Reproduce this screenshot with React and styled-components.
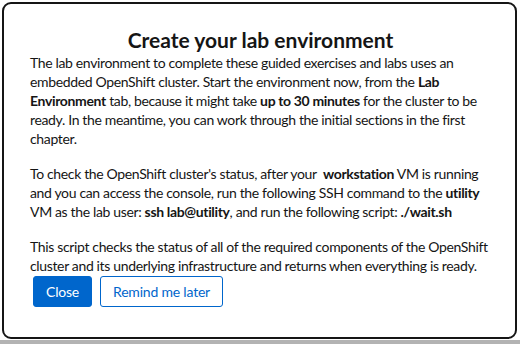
import React from "react";
import styled, { createGlobalStyle } from "styled-components";

const GlobalStyle = createGlobalStyle`
  html, body {
    margin: 0;
    padding: 0;
  }
  body {
    width: 520px;
    height: 344px;
    overflow: hidden;
    background: linear-gradient(to bottom, #ffffff 0, #ffffff 340px, #b3b3b3 340px);
    font-family: "Lato", "Liberation Sans", sans-serif;
  }
`;

const Page = styled.div`
  padding: 2px 3px 5px 2px;
`;

const Modal = styled.div`
  box-sizing: border-box;
  height: 337px;
  background: #fff;
  border: 2px solid #151515;
  border-radius: 9px;
  padding: 24px 8px 0 26px;
  color: #151515;
`;

const Title = styled.h1`
  margin: 0 16px 1px 0;
  text-align: center;
  font-size: 21px;
  font-weight: 700;
  line-height: 24px;
`;

const Body = styled.div`
  display: flex;
  flex-direction: column;
  gap: 16px;
  font-size: 14px;
  line-height: 19px;
  letter-spacing: -0.35px;
`;

const Para = styled.p`
  margin: 0;
  white-space: nowrap;
`;

const Actions = styled.div`
  display: flex;
  gap: 8px;
  margin-top: 1px;
  padding-left: 3px;
`;

const Button = styled.button`
  box-sizing: border-box;
  height: 31px;
  padding: 0 12px;
  border-radius: 3px;
  font-family: inherit;
  font-size: 14px;
  letter-spacing: -0.2px;
  border: 1px solid #0066cc;
  background: ${(p) => (p.$primary ? "#0066cc" : "#fff")};
  color: ${(p) => (p.$primary ? "#fff" : "#0066cc")};
  cursor: pointer;
`;

export default function App() {
  return (
    <>
      <GlobalStyle />
      <Page>
        <Modal>
          <Title>Create your lab environment</Title>
          <Body>
            <Para>
              The lab environment to complete these guided exercises and labs uses an
              <br />
              embedded OpenShift cluster. Start the environment now, from the <b>Lab</b>
              <br />
              <b>Environment</b> tab, because it might take <b>up to 30 minutes</b> for
              the cluster to be
              <br />
              ready. In the meantime, you can work through the initial sections in the first
              <br />
              chapter.
            </Para>
            <Para>
              To check the OpenShift cluster's status, after your{"\u00a0 "}
              <b>workstation</b> VM is running
              <br />
              and you can access the console, run the following SSH command to the{" "}
              <b>utility</b>
              <br />
              VM as the lab user: <b>ssh lab@utility</b>, and run the following script:{" "}
              <b>./wait.sh</b>
            </Para>
            <Para>
              This script checks the status of all of the required components of the OpenShift
              <br />
              cluster and its underlying infrastructure and returns when everything is ready.
            </Para>
          </Body>
          <Actions>
            <Button $primary>Close</Button>
            <Button>Remind me later</Button>
          </Actions>
        </Modal>
      </Page>
    </>
  );
}
